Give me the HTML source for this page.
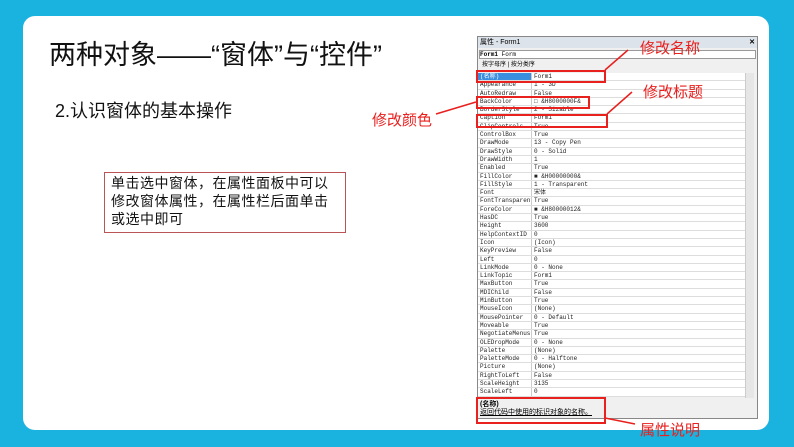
<!DOCTYPE html>
<html><head><meta charset="utf-8"><style>
*{margin:0;padding:0;box-sizing:border-box}
body{width:794px;height:447px;background:#1ab3e0;position:relative;overflow:hidden;font-family:"Liberation Sans","Noto Sans CJK SC",sans-serif}
.card{position:absolute;left:23px;top:16px;width:746px;height:414px;background:#fff;border-radius:12px}
.t{position:absolute;white-space:nowrap}
.red{color:#e8201e;font-size:15px}
.win{position:absolute;left:477px;top:36px;width:281px;height:383px;background:#f0f0f0;border:1px solid #888}
.rows{position:absolute;left:478px;top:73px;width:267px}
.r{height:8.3px;display:flex;font-family:"Liberation Mono",monospace;font-size:6px;line-height:8.3px;color:#222;border-bottom:1px solid #ddd;background:#fff}
.r span:first-child{width:54px;border-right:1px solid #ccc;padding-left:2px;overflow:hidden}
.r span:last-child{padding-left:2px}
.box{position:absolute;border:2px solid #e8201e}
</style></head><body>
<div class="card"></div>
<div class="t" style="left:49px;top:33px;font-size:27px;color:#111">两种对象——“窗体”与“控件”</div>
<div class="t" style="left:55px;top:97px;font-size:18px;color:#111">2.认识窗体的基本操作</div>
<div style="position:absolute;left:104px;top:172px;width:242px;height:61px;border:1px solid #b55;padding:1px 0 0 6px;font-size:14px;line-height:18px;color:#111;white-space:nowrap;letter-spacing:0.5px">单击选中窗体，在属性面板中可以<br>修改窗体属性，在属性栏后面单击<br>或选中即可</div>
<div class="win">
 <div style="height:11px;background:#dde3ea;font-size:7px;line-height:11px;padding-left:2px">属性 - Form1<span style="position:absolute;right:2px;top:0;font-weight:bold">✕</span></div>
 <div style="margin:2px 1px;height:9px;background:#fff;border:1px solid #999;font-size:6px;line-height:8px;font-family:'Liberation Mono',monospace"><b>Form1</b> Form</div>
 <div style="font-size:6px;padding-left:4px;line-height:9px">按字母序 | 按分类序</div>
</div>
<div style="position:absolute;left:745px;top:73px;width:9px;height:325px;background:#e6e6e6;border-left:1px solid #ccc"></div>
<div class="rows">
<div class="r" style="background:#fff"><span style="background:#3a8ee0;color:#fff">(名称)</span><span>Form1</span></div>
<div class="r"><span>Appearance</span><span>1 - 3D</span></div>
<div class="r"><span>AutoRedraw</span><span>False</span></div>
<div class="r"><span>BackColor</span><span>□ &amp;H8000000F&amp;</span></div>
<div class="r"><span>BorderStyle</span><span>2 - Sizable</span></div>
<div class="r"><span>Caption</span><span>Form1</span></div>
<div class="r"><span>ClipControls</span><span>True</span></div>
<div class="r"><span>ControlBox</span><span>True</span></div>
<div class="r"><span>DrawMode</span><span>13 - Copy Pen</span></div>
<div class="r"><span>DrawStyle</span><span>0 - Solid</span></div>
<div class="r"><span>DrawWidth</span><span>1</span></div>
<div class="r"><span>Enabled</span><span>True</span></div>
<div class="r"><span>FillColor</span><span>■ &amp;H00000000&amp;</span></div>
<div class="r"><span>FillStyle</span><span>1 - Transparent</span></div>
<div class="r"><span>Font</span><span>宋体</span></div>
<div class="r"><span>FontTransparent</span><span>True</span></div>
<div class="r"><span>ForeColor</span><span>■ &amp;H80000012&amp;</span></div>
<div class="r"><span>HasDC</span><span>True</span></div>
<div class="r"><span>Height</span><span>3600</span></div>
<div class="r"><span>HelpContextID</span><span>0</span></div>
<div class="r"><span>Icon</span><span>(Icon)</span></div>
<div class="r"><span>KeyPreview</span><span>False</span></div>
<div class="r"><span>Left</span><span>0</span></div>
<div class="r"><span>LinkMode</span><span>0 - None</span></div>
<div class="r"><span>LinkTopic</span><span>Form1</span></div>
<div class="r"><span>MaxButton</span><span>True</span></div>
<div class="r"><span>MDIChild</span><span>False</span></div>
<div class="r"><span>MinButton</span><span>True</span></div>
<div class="r"><span>MouseIcon</span><span>(None)</span></div>
<div class="r"><span>MousePointer</span><span>0 - Default</span></div>
<div class="r"><span>Moveable</span><span>True</span></div>
<div class="r"><span>NegotiateMenus</span><span>True</span></div>
<div class="r"><span>OLEDropMode</span><span>0 - None</span></div>
<div class="r"><span>Palette</span><span>(None)</span></div>
<div class="r"><span>PaletteMode</span><span>0 - Halftone</span></div>
<div class="r"><span>Picture</span><span>(None)</span></div>
<div class="r"><span>RightToLeft</span><span>False</span></div>
<div class="r"><span>ScaleHeight</span><span>3135</span></div>
<div class="r"><span>ScaleLeft</span><span>0</span></div>
</div>
<div class="t" style="left:480px;top:401px;font-size:7px;line-height:8px"><b>(名称)</b><br><u>返回代码中使用的标识对象的名称。</u></div>
<div class="box" style="left:476px;top:70px;width:130px;height:13px"></div>
<div class="box" style="left:476px;top:96px;width:114px;height:13px"></div>
<div class="box" style="left:476px;top:114px;width:132px;height:14px"></div>
<div class="box" style="left:476px;top:397px;width:130px;height:27px"></div>
<svg style="position:absolute;left:0;top:0" width="794" height="447"><g stroke="#e8201e" stroke-width="1.5" fill="none"><line x1="605" y1="70" x2="628" y2="50"/><line x1="607" y1="114" x2="632" y2="92"/><line x1="476" y1="102" x2="436" y2="114"/><line x1="605" y1="418" x2="635" y2="424"/></g></svg>
<div class="t red" style="left:640px;top:37px">修改名称</div>
<div class="t red" style="left:643px;top:81px">修改标题</div>
<div class="t red" style="left:372px;top:109px">修改颜色</div>
<div class="t red" style="left:640px;top:419px">属性说明</div>
</body></html>
